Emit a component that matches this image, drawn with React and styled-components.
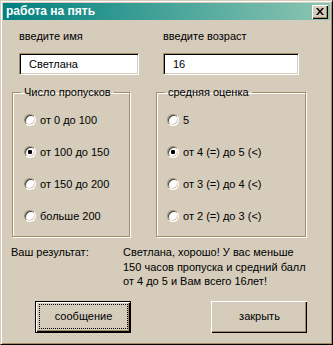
import styled, { createGlobalStyle } from 'styled-components';

const FACE = '#d5ccbb';
const SHADOW = '#a28d68';

const GlobalStyle = createGlobalStyle`
  html, body {
    margin: 0;
    padding: 0;
    background: ${FACE};
  }
  * {
    box-sizing: border-box;
  }
`;

const passOptions = [
  { label: 'от 0 до 100', checked: false },
  { label: 'от 100 до 150', checked: true },
  { label: 'от 150 до 200', checked: false },
  { label: 'больше 200', checked: false },
];

const markOptions = [
  { label: '5', checked: false },
  { label: 'от 4 (=) до 5 (<)', checked: true },
  { label: 'от 3 (=) до 4 (<)', checked: false },
  { label: 'от 2 (=) до 3 (<)', checked: false },
];

const RadioList = ({ options, inset }) => (
  <Options $inset={inset}>
    {options.map((o) => (
      <Option key={o.label}>
        <Radio $checked={o.checked} />
        <span>{o.label}</span>
      </Option>
    ))}
  </Options>
);

const App = () => {
  return (
    <>
      <GlobalStyle />
      <Window>
        <TitleBar>
          <Title>работа на пять</Title>
          <CloseButton>
            <svg width="8" height="7" viewBox="0 0 8 7">
              <path
                d="M0 0h2l2 2.4L6 0h2L5 3.5 8 7H6L4 4.6 2 7H0l3-3.5z"
                fill="#000"
              />
            </svg>
          </CloseButton>
        </TitleBar>
        <Body>
          <Columns>
            <Column>
              <FieldLabel>введите имя</FieldLabel>
              <TextInput $width={120} value="Светлана" readOnly />
              <Group>
                <Legend>Число пропусков</Legend>
                <RadioList options={passOptions} inset={11} />
              </Group>
            </Column>
            <Column>
              <FieldLabel>введите возраст</FieldLabel>
              <TextInput $width={136} value="16" readOnly />
              <Group>
                <Legend>средняя оценка</Legend>
                <RadioList options={markOptions} inset={10} />
              </Group>
            </Column>
          </Columns>
          <Result>
            <ResultLabel>Ваш результат:</ResultLabel>
            <ResultText>
              Светлана, хорошо! У вас меньше
              <br />
              150 часов пропуска и средний балл
              <br />
              от 4 до 5 и Вам всего 16лет!
            </ResultText>
          </Result>
          <Buttons>
            <Button $default={true}>
              <Focus>сообщение</Focus>
            </Button>
            <Button>
              <Focus $hidden={true}>закрыть</Focus>
            </Button>
          </Buttons>
        </Body>
      </Window>
    </>
  );
};
export default App;

const Window = styled.div`
  width: 333px;
  height: 345px;
  background: ${FACE};
  border: 1px solid;
  border-color: ${FACE} #000 #000 ${FACE};
  box-shadow: inset 1px 1px 0 #fff, inset -1px -1px 0 ${SHADOW};
  padding: 2px;
  font-family: 'Liberation Sans', Arial, sans-serif;
  font-size: 11px;
  color: #000;
`;
const TitleBar = styled.div`
  height: 17px;
  display: flex;
  align-items: center;
  justify-content: space-between;
  padding: 0 2px 0 3px;
  background: linear-gradient(to right, #008080, #8cc6b2);
`;
const Title = styled.span`
  color: #fff;
  font-weight: 700;
  font-size: 12px;
  line-height: 17px;
`;
const CloseButton = styled.div`
  width: 16px;
  height: 14px;
  display: flex;
  align-items: center;
  justify-content: center;
  background: ${FACE};
  box-shadow: inset 1px 1px 0 #fff, inset -1px -1px 0 #000,
    inset -2px -2px 0 ${SHADOW};
`;
const Body = styled.div`
  padding: 10px 9px 0;
`;
const Columns = styled.div`
  display: grid;
  grid-template-columns: 118px 150px;
  column-gap: 26px;
`;
const Column = styled.div`
  display: flex;
  flex-direction: column;
  align-items: flex-start;
`;
const FieldLabel = styled.div`
  margin-left: 7px;
  line-height: 13px;
`;
const TextInput = styled.input`
  margin: 10px 0 0 7px;
  width: ${(p) => p.$width}px;
  height: 22px;
  padding: 0 0 0 9px;
  border: 1px solid;
  border-color: ${SHADOW} #fff #fff ${SHADOW};
  box-shadow: inset 1px 1px 0 #000, inset -1px -1px 0 ${FACE};
  background: #fff;
  font-family: inherit;
  font-size: 11px;
  color: #000;
  outline: none;
`;
const Group = styled.fieldset`
  margin: 10px 0 0;
  width: 100%;
  min-width: 0;
  padding: 5px 0 4px;
  border: 1px solid ${SHADOW};
  box-shadow: 1px 1px 0 #fff, inset 1px 1px 0 #fff;
`;
const Legend = styled.legend`
  margin-left: 8px;
  padding: 0 3px;
  line-height: 14px;
`;
const Options = styled.div`
  display: flex;
  flex-direction: column;
  padding-left: ${(p) => p.$inset}px;
`;
const Option = styled.div`
  height: 32px;
  display: flex;
  align-items: center;
  gap: 4px;
  line-height: 13px;
`;
const Radio = styled.span`
  position: relative;
  width: 12px;
  height: 12px;
  flex: none;
  border-radius: 50%;
  background: #fff;
  border: 1px solid;
  border-color: ${SHADOW} #fff #fff ${SHADOW};
  box-shadow: inset 1px 1px 0 #404040, inset -1px -1px 0 ${FACE};
  &::after {
    content: '';
    display: ${(p) => (p.$checked ? 'block' : 'none')};
    position: absolute;
    left: 3px;
    top: 3px;
    width: 4px;
    height: 4px;
    border-radius: 1px;
    background: #000;
  }
`;
const Result = styled.div`
  display: flex;
  margin: 8px 0 0 -1px;
  line-height: 14.5px;
`;
const ResultLabel = styled.div`
  width: 112px;
  flex: none;
`;
const ResultText = styled.div`
  white-space: nowrap;
`;
const Buttons = styled.div`
  display: flex;
  gap: 80px;
  margin-top: 12px;
  padding-left: 23px;
`;
const Button = styled.div`
  width: 96px;
  height: 32px;
  display: flex;
  padding: 2px 2px 3px 3px;
  background: ${FACE};
  border: 1px solid ${(p) => (p.$default ? '#000' : FACE)};
  box-shadow: inset 1px 1px 0 #fff, inset -1px -1px 0 #000,
    inset -2px -2px 0 ${SHADOW};
  ${(p) =>
    !p.$default &&
    `
    border: none;
    padding: 3px 3px 4px 4px;
  `}
`;
const Focus = styled.span`
  flex: 1;
  display: flex;
  align-items: center;
  justify-content: center;
  border: 1px dotted ${(p) => (p.$hidden ? 'transparent' : '#000')};
  line-height: 13px;
`;
